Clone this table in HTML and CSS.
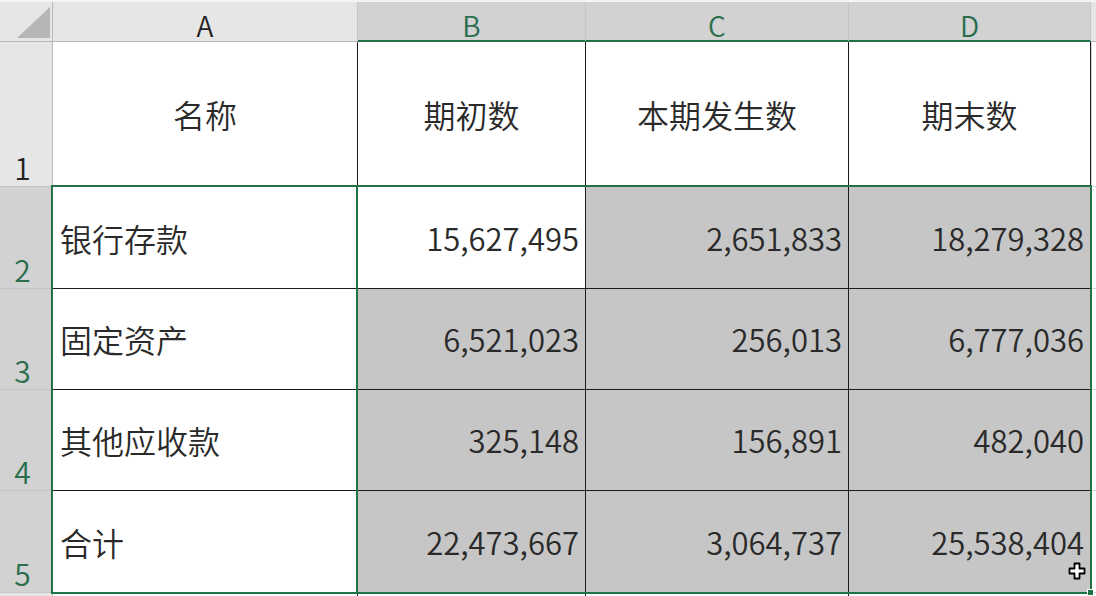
FILE: index.html
```html
<!DOCTYPE html>
<html lang="zh-CN">
<head>
<meta charset="utf-8">
<title>Sheet</title>
<link rel="stylesheet" href="styles.css">
</head>
<body>
<div class="sheet">
  <div class="grid">
    <div class="corner"><svg class="tri" width="33" height="31" viewBox="0 0 33 31"><polygon points="0,31 33,31 33,0" fill="#b6b6b6"/></svg></div>
    <div class="ch">A</div>
    <div class="ch sel">B</div>
    <div class="ch sel">C</div>
    <div class="ch sel">D</div>
    <div class="ch edge"></div>

    <div class="rh">1</div>
    <div class="c hd">名称</div>
    <div class="c hd">期初数</div>
    <div class="c hd">本期发生数</div>
    <div class="c hd">期末数</div>
    <div class="c edge"></div>

    <div class="rh sel">2</div>
    <div class="c name">银行存款</div>
    <div class="c num">15,627,495</div>
    <div class="c num fill">2,651,833</div>
    <div class="c num fill">18,279,328</div>
    <div class="c edge"></div>

    <div class="rh sel">3</div>
    <div class="c name">固定资产</div>
    <div class="c num fill">6,521,023</div>
    <div class="c num fill">256,013</div>
    <div class="c num fill">6,777,036</div>
    <div class="c edge"></div>

    <div class="rh sel">4</div>
    <div class="c name">其他应收款</div>
    <div class="c num fill">325,148</div>
    <div class="c num fill">156,891</div>
    <div class="c num fill">482,040</div>
    <div class="c edge"></div>

    <div class="rh sel">5</div>
    <div class="c name">合计</div>
    <div class="c num fill">22,473,667</div>
    <div class="c num fill">3,064,737</div>
    <div class="c num fill">25,538,404</div>
    <div class="c edge"></div>

    <div class="rh"></div>
    <div class="c"></div>
    <div class="c"></div>
    <div class="c"></div>
    <div class="c"></div>
    <div class="c edge"></div>
  </div>
  <div class="outline o-a"></div>
  <div class="outline o-b"></div>
  <div class="handle"></div>
  <svg class="cursor" width="18" height="18" viewBox="0 0 18 18"><path d="M6.5 1.5h5v5h5v5h-5v5h-5v-5h-5v-5h5z" fill="#fff" stroke="#000" stroke-width="1.8" stroke-linejoin="round"/></svg>
</div>
</body>
</html>
```

FILE: styles.css
```css
html, body {
  margin: 0;
  padding: 0;
  background: #ffffff;
  overflow: hidden;
}

.sheet {
  position: relative;
  width: 1096px;
  height: 596px;
  padding-top: 2px;
  box-sizing: border-box;
  background: #f4f4f4;
  font-family: "Noto Sans CJK SC", "Noto Sans", sans-serif;
  font-weight: 350;
  color: #2a2a2a;
  overflow: hidden;
}

.grid {
  display: grid;
  grid-template-columns: 53px 305px 228px 263px 242px 1fr;
  grid-template-rows: 40px 145px 102px 101px 101px 102px 1fr;
  height: 594px;
}

.grid > div {
  box-sizing: border-box;
  min-width: 0;
  min-height: 0;
}

.corner {
  background: #e6e6e6;
  border-right: 1px solid #b9b9b9;
  border-bottom: 1px solid #b9b9b9;
  display: flex;
  justify-content: flex-end;
  align-items: flex-end;
  padding: 0 2px 3px 0;
}

.tri { display: block; }

.ch {
  background: #e6e6e6;
  border-right: 1px solid #c4c4c4;
  border-bottom: 1px solid #b9b9b9;
  display: flex;
  justify-content: center;
  align-items: flex-end;
  font-size: 28px;
  line-height: 28px;
  padding-bottom: 2px;
  color: #222;
}

.ch.sel {
  background: #d2d2d2;
  color: #2a6e4e;
  border-bottom: 2px solid #217346;
  padding-bottom: 1px;
}

.ch.edge {
  border-right: none;
}

.rh {
  background: #e6e6e6;
  border-right: 1px solid #b9b9b9;
  border-bottom: 1px solid #c4c4c4;
  display: flex;
  justify-content: center;
  align-items: flex-end;
  padding: 0 7px 4px 0;
  font-size: 30px;
  line-height: 30px;
  color: #222;
}

.rh.sel {
  background: #d2d2d2;
  color: #2a6e4e;
}

.c {
  background: #ffffff;
  border-right: 1px solid #1c1c1c;
  border-bottom: 1px solid #1c1c1c;
  display: flex;
  align-items: center;
  line-height: 32px;
  white-space: nowrap;
}

.c.edge {
  border-right: none;
  border-bottom: 1px solid #d6d6d6;
  border-left: 1px solid #d6d6d6;
}

.hd {
  justify-content: center;
  font-size: 32px;
}

.name {
  justify-content: flex-start;
  font-size: 32px;
  padding-left: 7px;
}

.num {
  justify-content: flex-end;
  font-size: 31px;
  padding-right: 6px;
}

.fill {
  background: #c6c6c6;
}

.outline {
  position: absolute;
  box-sizing: border-box;
  border: 2px solid #217346;
  pointer-events: none;
}

.o-a {
  left: 51px;
  top: 185px;
  width: 1041px;
  height: 409px;
}

.o-b {
  left: 356px;
  top: 185px;
  width: 736px;
  height: 409px;
}

.handle {
  position: absolute;
  left: 1087px;
  top: 589px;
  width: 7px;
  height: 7px;
  box-sizing: border-box;
  background: #217346;
  border: 1px solid #ffffff;
}

.cursor {
  position: absolute;
  left: 1068px;
  top: 562px;
}
```
